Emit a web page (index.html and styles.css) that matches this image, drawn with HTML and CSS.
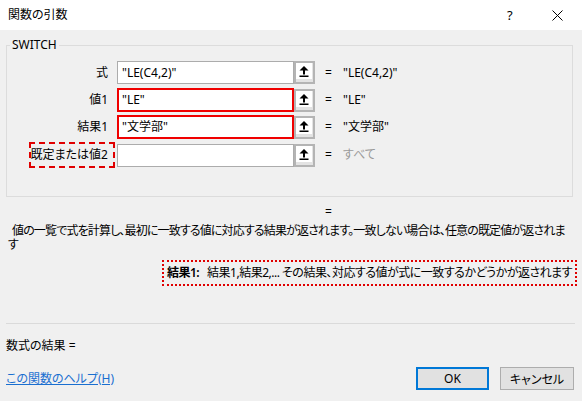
FILE: index.html
```html
<!DOCTYPE html>
<html lang="ja">
<head>
<meta charset="utf-8">
<title>関数の引数</title>
<link rel="stylesheet" href="styles.css">
</head>
<body>
<div class="dialog">
  <div class="titlebar">
    <span class="title">関数の引数</span>
    <span class="help">?</span>
    <span class="close">
      <svg width="11" height="11" viewBox="0 0 11 11"><path d="M0.5 0.5 L10.5 10.5 M10.5 0.5 L0.5 10.5" stroke="#000" stroke-width="1" fill="none"/></svg>
    </span>
  </div>
  <div class="content">
    <fieldset class="group">
      <legend>SWITCH</legend>
      <div class="rows">
        <div class="row">
          <span class="label">式</span>
          <span class="input">"LE(C4,2)"</span>
          <span class="pick"><span class="pick-face"><svg width="16" height="16" viewBox="0 0 16 16"><polygon points="8,3 3.5,7.5 12.5,7.5" fill="#000"/><rect x="7" y="7" width="2" height="4.5" fill="#000"/><rect x="3.5" y="12.5" width="9" height="1.5" fill="#000"/></svg></span></span>
          <span class="eq">=</span>
          <span class="value">"LE(C4,2)"</span>
        </div>
        <div class="row">
          <span class="label">値1</span>
          <span class="input marked">"LE"</span>
          <span class="pick"><span class="pick-face"><svg width="16" height="16" viewBox="0 0 16 16"><polygon points="8,3 3.5,7.5 12.5,7.5" fill="#000"/><rect x="7" y="7" width="2" height="4.5" fill="#000"/><rect x="3.5" y="12.5" width="9" height="1.5" fill="#000"/></svg></span></span>
          <span class="eq">=</span>
          <span class="value">"LE"</span>
        </div>
        <div class="row">
          <span class="label">結果1</span>
          <span class="input marked">"文学部"</span>
          <span class="pick"><span class="pick-face"><svg width="16" height="16" viewBox="0 0 16 16"><polygon points="8,3 3.5,7.5 12.5,7.5" fill="#000"/><rect x="7" y="7" width="2" height="4.5" fill="#000"/><rect x="3.5" y="12.5" width="9" height="1.5" fill="#000"/></svg></span></span>
          <span class="eq">=</span>
          <span class="value">"文学部"</span>
        </div>
        <div class="row">
          <span class="label"><span class="label-marked">既定または値2</span></span>
          <span class="input"></span>
          <span class="pick"><span class="pick-face"><svg width="16" height="16" viewBox="0 0 16 16"><polygon points="8,3 3.5,7.5 12.5,7.5" fill="#000"/><rect x="7" y="7" width="2" height="4.5" fill="#000"/><rect x="3.5" y="12.5" width="9" height="1.5" fill="#000"/></svg></span></span>
          <span class="eq">=</span>
          <span class="value muted">すべて</span>
        </div>
      </div>
    </fieldset>
    <div class="result-eq">=</div>
    <p class="desc">値の一覧で式を計算し、最初に一致する値に対応する結果が返されます。一致しない場合は、任意の既定値が返されま<br>す</p>
    <div class="detail"><b>結果1:</b>&nbsp;&nbsp;&nbsp;結果1,結果2,... その結果、対応する値が式に一致するかどうかが返されます</div>
    <div class="sep"></div>
    <div class="formula-result">数式の結果 =</div>
    <div class="footer">
      <a class="help-link" href="#">この関数のヘルプ(H)</a>
      <button class="btn ok">OK</button>
      <button class="btn cancel">キャンセル</button>
    </div>
  </div>
</div>
</body>
</html>
```

FILE: styles.css
```css
html, body {
  margin: 0;
  padding: 0;
}
body {
  width: 582px;
  height: 401px;
  overflow: hidden;
  background: #f0f0f0;
  font-family: "Noto Sans", "Noto Sans CJK JP", sans-serif;
  font-size: 12px;
  font-feature-settings: "palt";
  color: #000;
}
.dialog {
  width: 582px;
  height: 401px;
}
.titlebar {
  height: 30px;
  background: #fff;
  display: flex;
  align-items: center;
  padding-left: 8px;
}
.title {
  flex: 1;
  font-size: 12px;
  line-height: 16px;
}
.help {
  font-size: 13px;
  line-height: 16px;
  width: 8px;
  margin-right: 37px;
}
.close {
  display: flex;
  width: 11px;
  height: 11px;
  margin-right: 19px;
}
.content {
  padding: 0 9px 0 6px;
}
.group {
  margin: 7px 0 0 0;
  padding: 8px 0 31px 0;
  border: 1px solid #dcdcdc;
  min-width: 0;
}
.group legend {
  margin-left: 3px;
  padding: 0 2px;
  line-height: 16px;
  font-size: 12px;
}
.rows {
  display: flex;
  flex-direction: column;
  gap: 4px;
}
.row {
  display: grid;
  grid-template-columns: 110px 177px 21px 28px 1fr;
  height: 23px;
  align-items: center;
}
.label {
  text-align: right;
  padding-right: 9px;
  line-height: 16px;
  white-space: nowrap;
}
.label-marked {
  display: inline-block;
  border: 2px dashed #e00000;
  padding: 3px 5px 3px 0;
  margin-right: -7px;
  margin-left: -2px;
  line-height: 16px;
}
.input {
  box-sizing: border-box;
  height: 23px;
  background: #fff;
  border: 1px solid #acacac;
  padding-left: 4px;
  line-height: 21px;
  white-space: nowrap;
}
.input.marked {
  border: 2px solid #f00000;
  padding-left: 3px;
  line-height: 19px;
  height: 24px;
}
.pick {
  box-sizing: border-box;
  height: 23px;
  border: 2px solid #b4b4b4;
  background: #e3e3e3;
  display: flex;
  align-items: flex-start;
}
.pick-face {
  display: flex;
  width: 16px;
  height: 16px;
  background: #fff;
}
.eq {
  padding-left: 10px;
  line-height: 16px;
}
.value {
  line-height: 16px;
  white-space: nowrap;
}
.value.muted {
  color: #9a9a9a;
}
.result-eq {
  margin-top: 8px;
  padding-left: 319px;
  line-height: 14px;
}
.desc {
  margin: 5px -4px 0 2px;
  line-height: 14px;
  text-indent: 4px;
  letter-spacing: -0.85px;
  white-space: nowrap;
}
.detail {
  margin: 8px -4px 0 156px;
  box-sizing: border-box;
  height: 26px;
  border: 2px dotted #e00000;
  padding-left: 3px;
  line-height: 22px;
  white-space: nowrap;
  letter-spacing: -0.5px;
  overflow: hidden;
}
.detail b {
  font-weight: 600;
}
.sep {
  margin: 37px -2px 0 0;
  height: 1px;
  background: #dadada;
}
.formula-result {
  margin-top: 14px;
  line-height: 16px;
}
.footer {
  margin-top: 13px;
  margin-right: -1px;
  display: flex;
  align-items: center;
  height: 23px;
}
.help-link {
  color: #1a6fd0;
  text-decoration: underline;
  line-height: 16px;
}
.btn {
  box-sizing: border-box;
  height: 23px;
  background: #e1e1e1;
  font-family: inherit;
  font-size: 12px;
  font-feature-settings: "palt";
  color: #000;
  padding: 0;
}
.ok {
  width: 73px;
  margin-left: auto;
  border: 2px solid #0078d7;
}
.cancel {
  width: 74px;
  margin-left: 11px;
  border: 1px solid #adadad;
}
```
